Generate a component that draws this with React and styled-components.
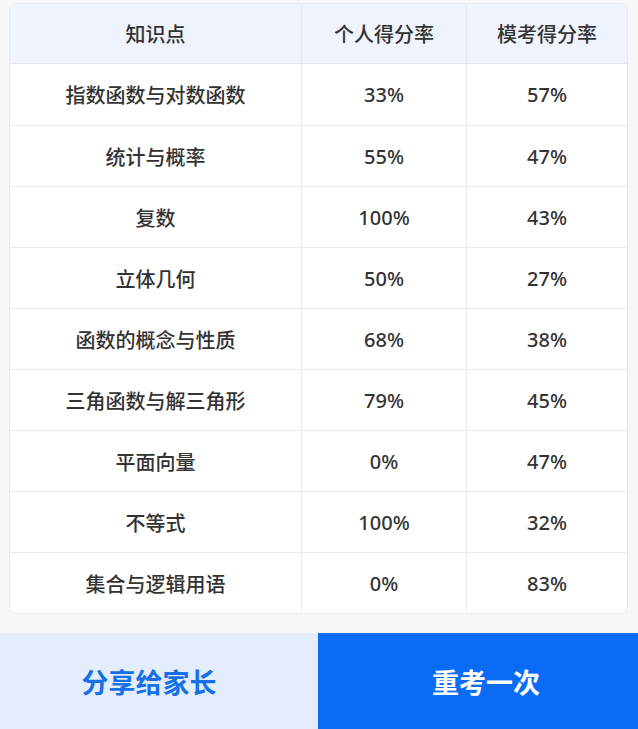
import React from "react";
import styled, { createGlobalStyle } from "styled-components";

const Global = createGlobalStyle`
  html, body { margin: 0; padding: 0; background: #f6f7f9; }
  body { font-family: "Noto Sans", "Noto Sans CJK SC", sans-serif; }
`;

const Page = styled.div`
  width: 638px;
  height: 729px;
  display: flex;
  flex-direction: column;
  background: #f6f7f9;
  overflow: hidden;
`;

const TableWrap = styled.div`
  margin: 3px 10px 0 9px;
  background: #fff;
  border: 1px solid #e9eaec;
  border-radius: 7px;
  overflow: hidden;
`;

const Table = styled.table`
  width: 100%;
  border-collapse: separate;
  border-spacing: 0;
  table-layout: fixed;
`;

const Th = styled.th`
  height: 60px;
  box-sizing: border-box;
  padding: 0;
  background: #eef3fd;
  color: #333;
  font-size: 20px;
  font-weight: 500;
  text-align: center;
  border-bottom: 1px solid #e6e8ec;
  border-left: ${(p) => (p.$first ? "none" : "1px solid #e6e8ec")};
`;

const Td = styled.td`
  height: 61px;
  box-sizing: border-box;
  padding: 0;
  color: #333;
  font-size: 20px;
  font-weight: 500;
  text-align: center;
  border-top: ${(p) => (p.$firstRow ? "none" : "1px solid #ebebeb")};
  border-left: ${(p) => (p.$first ? "none" : "1px solid #ebebeb")};
`;

const Footer = styled.div`
  margin-top: auto;
  height: 96px;
  display: flex;
`;

const Btn = styled.div`
  flex: ${(p) => (p.$primary ? "0 0 320px" : "0 0 318px")};
  box-sizing: border-box;
  padding: ${(p) => (p.$primary ? "0 0 0 16px" : "0 20px 0 0")};
  display: flex;
  align-items: center;
  justify-content: center;
  background: ${(p) => (p.$primary ? "#0a6cf6" : "#e3edfd")};
  color: ${(p) => (p.$primary ? "#fff" : "#1670e6")};
  font-size: 27px;
  font-weight: 700;
`;

const rows = [
  ["指数函数与对数函数", "33%", "57%"],
  ["统计与概率", "55%", "47%"],
  ["复数", "100%", "43%"],
  ["立体几何", "50%", "27%"],
  ["函数的概念与性质", "68%", "38%"],
  ["三角函数与解三角形", "79%", "45%"],
  ["平面向量", "0%", "47%"],
  ["不等式", "100%", "32%"],
  ["集合与逻辑用语", "0%", "83%"],
];

export default function App() {
  return (
    <Page>
      <Global />
      <TableWrap>
        <Table>
          <colgroup>
            <col style={{ width: "291px" }} />
            <col style={{ width: "165px" }} />
            <col />
          </colgroup>
          <thead>
            <tr>
              <Th $first>知识点</Th>
              <Th>个人得分率</Th>
              <Th>模考得分率</Th>
            </tr>
          </thead>
          <tbody>
            {rows.map((r, i) => (
              <tr key={i}>
                <Td $first $firstRow={i === 0}>{r[0]}</Td>
                <Td $firstRow={i === 0}>{r[1]}</Td>
                <Td $firstRow={i === 0}>{r[2]}</Td>
              </tr>
            ))}
          </tbody>
        </Table>
      </TableWrap>
      <Footer>
        <Btn>分享给家长</Btn>
        <Btn $primary>重考一次</Btn>
      </Footer>
    </Page>
  );
}
